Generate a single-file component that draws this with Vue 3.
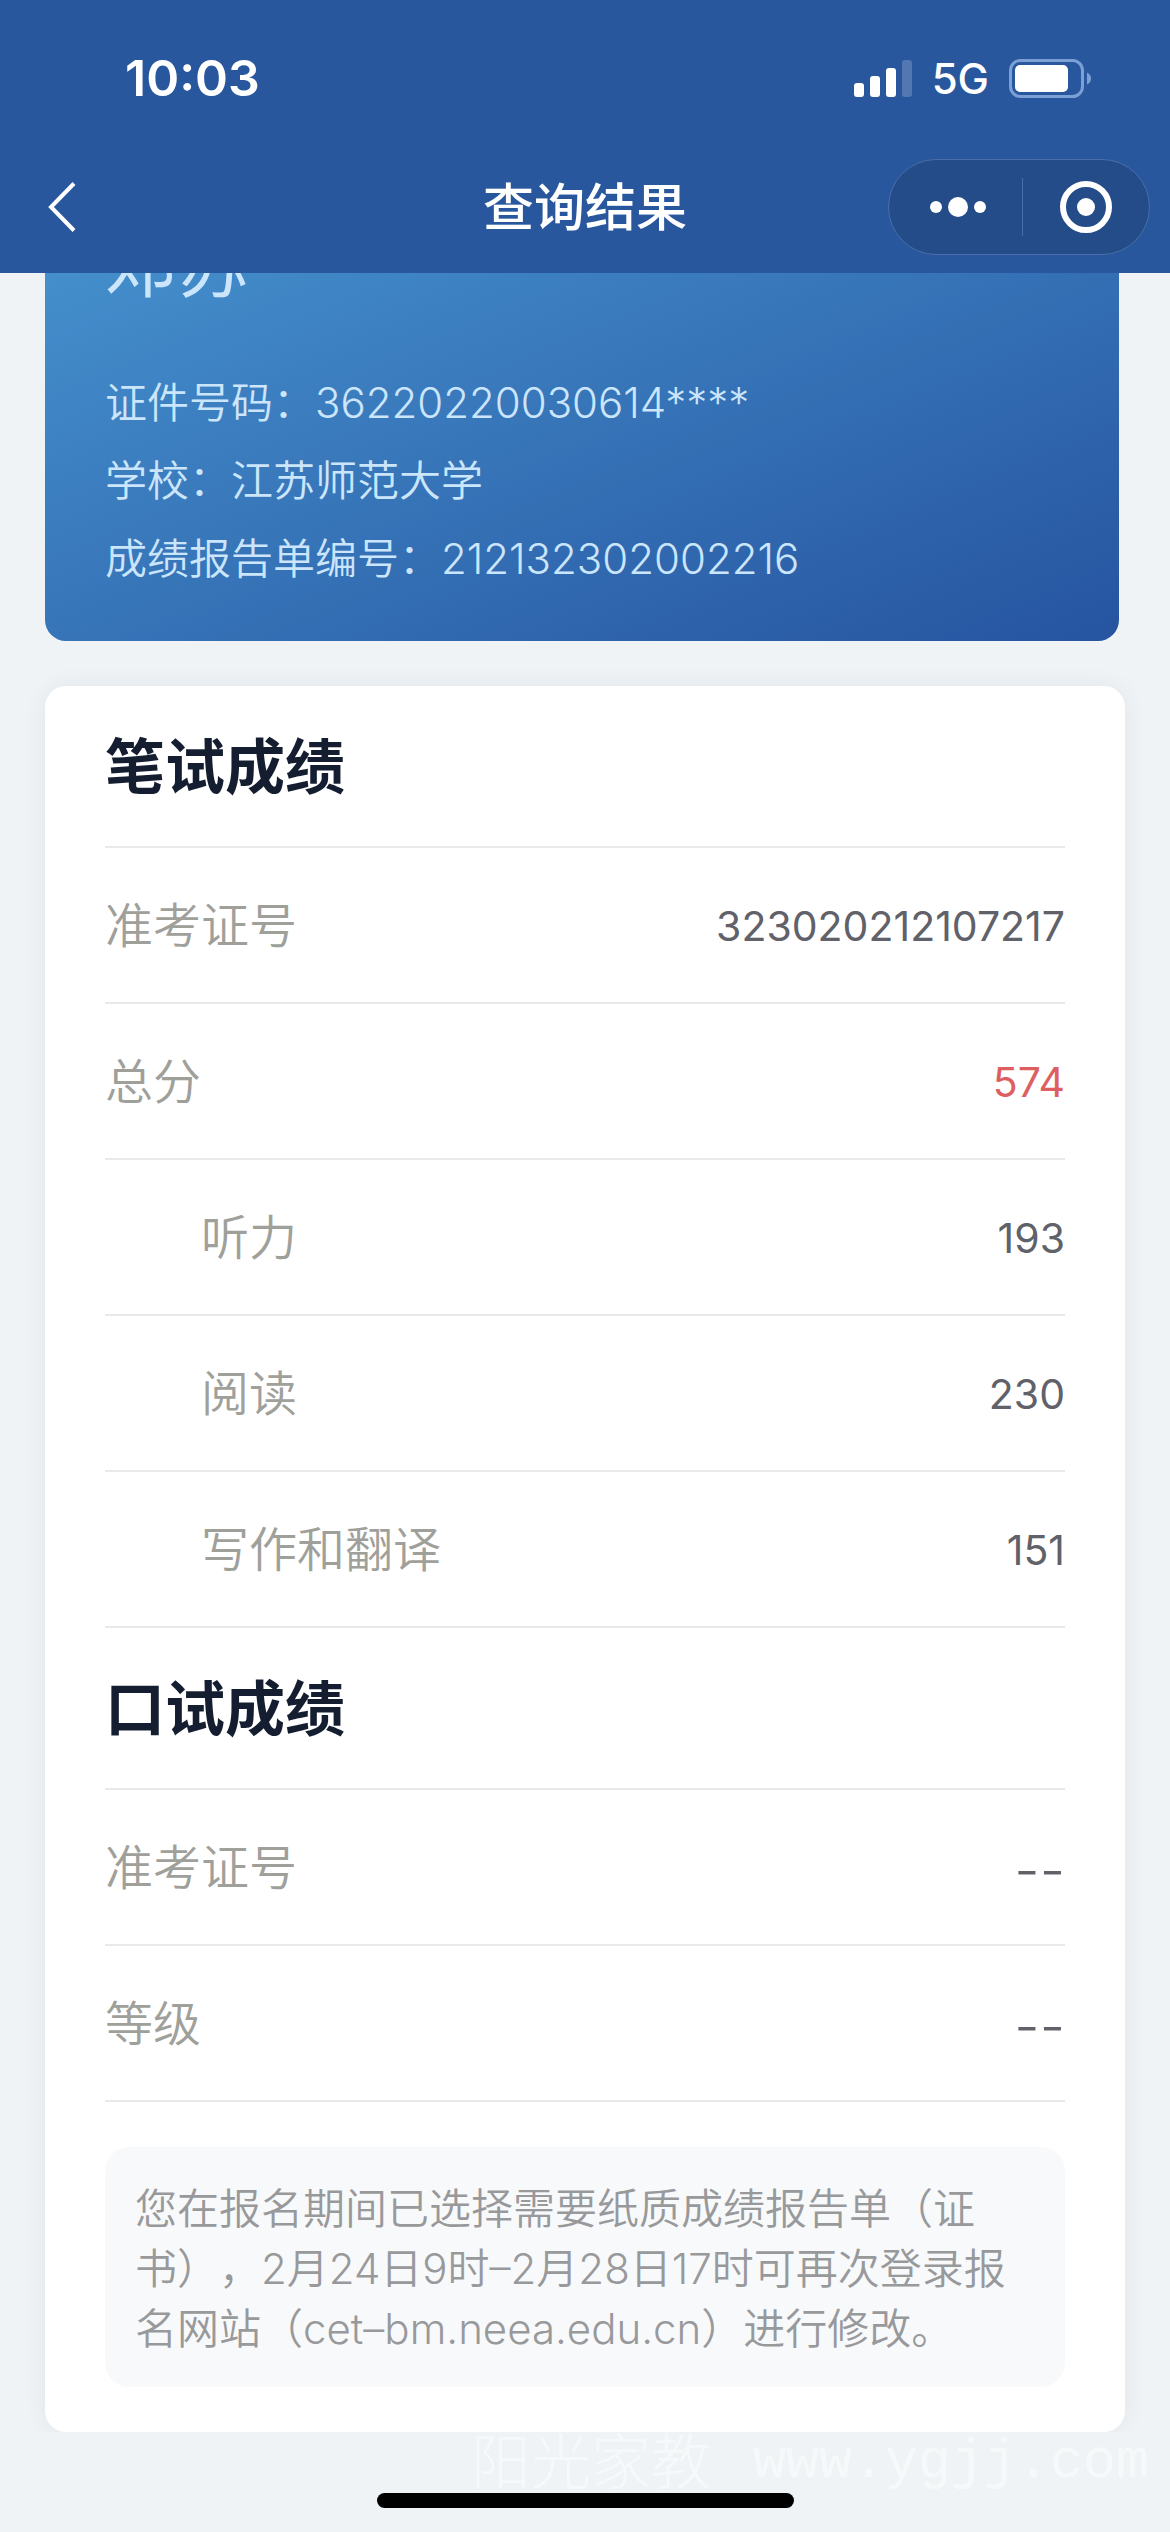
<script setup>
const profile = {
  name: '邓苏',
  lines: [
    { label: '证件号码', value: '36220220030614****' },
    { label: '学校', value: '江苏师范大学' },
    { label: '成绩报告单编号', value: '212132302002216' },
  ],
}

const sections = [
  {
    title: '笔试成绩',
    rows: [
      { label: '准考证号', value: '323020212107217' },
      { label: '总分', value: '574', total: true },
      { label: '听力', value: '193', sub: true },
      { label: '阅读', value: '230', sub: true },
      { label: '写作和翻译', value: '151', sub: true },
    ],
  },
  {
    title: '口试成绩',
    rows: [
      { label: '准考证号', value: '--', empty: true },
      { label: '等级', value: '--', empty: true },
    ],
  },
]
</script>

<template>
  <div class="screen">
    <header class="top">
      <div class="status">
        <time class="clock">10:03</time>
        <div class="indicators">
          <svg class="signal" viewBox="0 0 58 37" aria-hidden="true">
            <rect x="0" y="23" width="10" height="14" rx="3" />
            <rect x="16" y="16" width="10" height="21" rx="3" />
            <rect x="32" y="8" width="10" height="29" rx="3" />
            <rect x="48" y="0" width="10" height="37" rx="3" opacity="0.2" />
          </svg>
          <span class="network">5G</span>
          <svg class="battery" viewBox="0 0 82 39" aria-hidden="true">
            <rect x="1.5" y="1.5" width="72" height="36" rx="10" fill="none" stroke="#7ba0d6" stroke-width="3" />
            <rect x="6" y="6" width="53" height="27" rx="5" fill="#fff" />
            <path d="M78 13.500q4 2 4 6t-4 6z" fill="#7ba0d6" />
          </svg>
        </div>
      </div>
      <nav class="bar">
        <button class="back" type="button" aria-label="返回">
          <svg viewBox="0 0 28 50"><path d="M26 1.500L3 25l23 23.500" fill="none" stroke="#fff" stroke-width="4" /></svg>
        </button>
        <h1 class="title">查询结果</h1>
        <div class="capsule">
          <button type="button" class="more" aria-label="更多">
            <svg viewBox="0 0 56 20"><circle cx="6" cy="10" r="6" /><circle cx="28" cy="10" r="10" /><circle cx="50" cy="10" r="6" /></svg>
          </button>
          <button type="button" class="close" aria-label="关闭">
            <svg viewBox="0 0 52 52"><circle cx="26" cy="26" r="23" fill="none" stroke="#fff" stroke-width="6" /><circle cx="26" cy="26" r="9" /></svg>
          </button>
        </div>
      </nav>
    </header>

    <main class="content">
      <section class="profile">
        <h2 class="name">{{ profile.name }}</h2>
        <p v-for="line in profile.lines" :key="line.label">{{ line.label }}：{{ line.value }}</p>
      </section>

      <section class="scores">
        <template v-for="section in sections" :key="section.title">
          <h2 class="heading">{{ section.title }}</h2>
          <table>
            <tbody>
              <tr
                v-for="row in section.rows"
                :key="row.label"
                :class="{ sub: row.sub, total: row.total, empty: row.empty }"
              >
                <th scope="row">{{ row.label }}</th>
                <td>{{ row.value }}</td>
              </tr>
            </tbody>
          </table>
        </template>
        <p class="note">您在报名期间已选择需要纸质成绩报告单（证书），2月24日9时–2月28日17时可再次登录报名网站（cet–bm.neea.edu.cn）进行修改。</p>
      </section>
    </main>

    <footer class="foot">
      <p class="watermark"><span class="mark-name">阳光家教</span><span class="mark-site">www.ygjj.com</span></p>
      <div class="home"></div>
    </footer>
  </div>
</template>

<style>
body {
  margin: 0;
  background: #eff3f6;
}
</style>

<style scoped>
.screen {
  display: flex;
  flex-direction: column;
  min-height: 100vh;
  background: #eff3f6;
  font-family: Inter, "Noto Sans CJK SC", sans-serif;
  font-size: 42px;
  text-spacing-trim: space-all;
}

h1,
h2,
p {
  margin: 0;
}

button {
  display: flex;
  align-items: center;
  justify-content: center;
  padding: 0;
  border: 0;
  background: none;
}

svg {
  display: block;
  fill: #fff;
}

.top {
  position: relative;
  z-index: 1;
  background: #28579e;
  color: #fff;
}

.status {
  display: flex;
  align-items: center;
  justify-content: space-between;
  height: 156px;
  padding: 0 79px 0 125px;
}

.clock {
  font-size: 50px;
  font-weight: 600;
}

.indicators {
  display: flex;
  align-items: center;
  gap: 20px;
}

.signal {
  width: 58px;
  height: 37px;
}

.network {
  font-weight: 500;
}

.battery {
  width: 82px;
  height: 39px;
}

.bar {
  display: grid;
  grid-template-columns: 1fr auto 1fr;
  align-items: center;
  height: 102px;
  padding: 0 20px 15px;
}

.back {
  justify-self: start;
  margin-left: 28px;
}

.back svg {
  width: 28px;
  height: 50px;
}

.title {
  padding-top: 2px;
  font-size: 51px;
  font-weight: 500;
  line-height: 60px;
}

.capsule {
  justify-self: end;
  display: flex;
  align-items: center;
  box-sizing: border-box;
  width: 262px;
  height: 96px;
  border: 1px solid #4a6fa8;
  border-radius: 48px;
  background: #234c88;
}

.capsule button {
  flex: 1;
  height: 58px;
}

.capsule .more {
  padding-left: 6px;
  border-right: 1px solid #4a6fa8;
}

.more svg {
  width: 56px;
  height: 20px;
}

.close svg {
  width: 52px;
  height: 52px;
}

.content {
  overflow: hidden;
  padding: 0 45px;
}

.profile {
  margin: -77px 6px 45px 0;
  padding: 30px 60px 43px;
  border-radius: 21px;
  background: linear-gradient(157deg, #4794d0, #2654a0);
  color: #cbe5fb;
  font-weight: 350;
  line-height: 78px;
}

.name {
  margin-bottom: 60px;
  font-size: 72px;
  font-weight: 400;
  line-height: 78px;
}

.scores {
  padding: 0 60px 45px;
  border-radius: 21px;
  background: #fff;
  box-shadow: 0 0 24px rgba(0, 0, 0, 0.06);
}

.heading {
  padding-top: 2px;
  color: #141e30;
  font-size: 60px;
  font-weight: 700;
  line-height: 158px;
  border-bottom: 2px solid #e9e9eb;
}

table {
  width: 100%;
  border-collapse: separate;
  border-spacing: 0;
}

th,
td {
  box-sizing: border-box;
  height: 156px;
  padding: 0;
  border-bottom: 2px solid #e9e9eb;
}

th {
  padding-bottom: 6px;
  color: #a0a09b;
  font-family: "Noto Sans CJK SC", sans-serif;
  font-size: 48px;
  font-weight: 350;
  text-align: left;
}

td {
  padding-top: 2px;
  color: #606169;
  font-size: 41px;
  text-align: right;
}

.sub th {
  padding-left: 96px;
}

.total td {
  color: #dd5f62;
}

.empty td {
  padding-top: 6px;
  font-size: 56px;
  font-weight: 300;
}

.note {
  margin-top: 45px;
  padding: 32px 30px 28px;
  border-radius: 24px;
  background: #f8f9fb;
  color: #98999b;
  font-weight: 350;
  line-height: 60px;
}

.foot {
  display: flex;
  flex-direction: column;
  align-items: center;
  padding-bottom: 24px;
}

.watermark {
  display: flex;
  align-self: flex-end;
  gap: 42px;
  padding-right: 21px;
  color: #f5f9f9;
  line-height: 61px;
}

.mark-name {
  font-size: 60px;
  font-weight: 300;
}

.mark-site {
  font-family: "Liberation Mono", monospace;
  font-size: 55px;
}

.home {
  width: 417px;
  height: 15px;
  border-radius: 8px;
  background: #000;
}
</style>
